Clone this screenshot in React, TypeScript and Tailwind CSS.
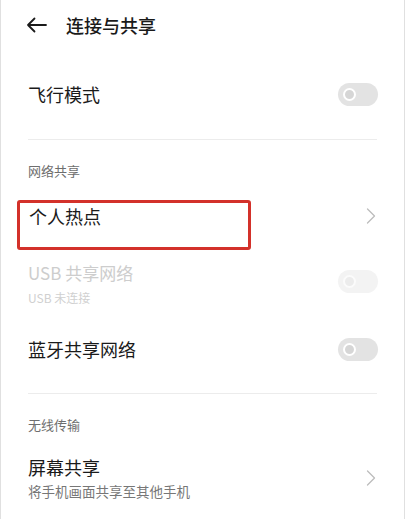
import React from "react";

const FONT = { fontFamily: '"Noto Sans CJK SC", "Noto Sans", sans-serif' };

const Toggle = ({ disabled = false }: { disabled?: boolean }) => (
  <div
    className={`w-[40px] h-[23px] rounded-full flex items-center pl-[5px] ${
      disabled ? "bg-[#f3f3f3]" : "bg-[#e3e3e3]"
    }`}
  >
    <span
      className={`w-[13px] h-[13px] rounded-full border-[2.5px] ${
        disabled ? "border-[#fbfbfb] bg-[#ececec]" : "border-white bg-[#d6d6d6]"
      }`}
    />
  </div>
);

const Chevron = () => (
  <svg width="10" height="16" viewBox="0 0 10 16" fill="none">
    <path d="M1.5 1L8.5 8L1.5 15" stroke="#bdbdbd" strokeWidth="1.3" strokeLinecap="round" strokeLinejoin="round" />
  </svg>
);

const Divider = ({ className = "" }: { className?: string }) => (
  <div className={`mx-[27px] h-px bg-[#ececec] ${className}`} />
);

const SectionLabel = ({ text }: { text: string }) => (
  <div className="h-[48px] pt-[22px] px-[27px] text-[13px] leading-[18px] text-[#6e6e6e]">{text}</div>
);

const App = () => {
  return (
    <div className="w-[405px] min-h-[519px] bg-white border-x border-[#e0e0e0]" style={FONT}>
      <div className="h-[49px] flex items-center pl-[25px]">
        <svg width="21" height="16" viewBox="0 0 21 16" fill="none">
          <path d="M20 8H2M8.5 1.5L2 8L8.5 14.5" stroke="#1a1a1a" strokeWidth="1.8" strokeLinecap="round" strokeLinejoin="round" />
        </svg>
        <span className="ml-[19px] text-[18px] font-medium text-[#1a1a1a] leading-[24px]">连接与共享</span>
      </div>

      <div className="h-[90px] flex items-center justify-between pl-[27px] pr-[26px]">
        <span className="text-[18px] leading-[24px] text-[#1a1a1a]">飞行模式</span>
        <Toggle />
      </div>
      <Divider />

      <SectionLabel text="网络共享" />
      <div className="relative h-[56px] flex items-center justify-between pl-[28px] pr-[28px]">
        <span className="text-[18px] leading-[24px] text-[#1a1a1a]">个人热点</span>
        <Chevron />
        <div className="absolute left-[16px] top-[12px] w-[234px] h-[50px] rounded-[3px] border-[3px] border-[#d3312a]" />
      </div>

      <div className="h-[72px] flex items-start justify-between pl-[27px] pr-[26px]">
        <div className="pt-[18px]">
          <div className="text-[17px] leading-[22px] text-[#cdcdcd]">USB 共享网络</div>
          <div className="mt-[5px] text-[12px] leading-[18px] text-[#d0d0d0]">USB 未连接</div>
        </div>
        <div className="mt-[26px]">
          <Toggle disabled />
        </div>
      </div>

      <div className="h-[66px] flex items-center justify-between pl-[27px] pr-[26px]">
        <span className="text-[18px] leading-[24px] text-[#1a1a1a]">蓝牙共享网络</span>
        <Toggle />
      </div>
      <Divider className="mt-[11px]" />

      <SectionLabel text="无线传输" />
      <div className="h-[71px] flex items-center justify-between pl-[27px] pr-[28px]">
        <div>
          <div className="text-[18px] leading-[24px] text-[#1a1a1a]">屏幕共享</div>
          <div className="mt-[3px] text-[13.5px] leading-[18px] text-[#777]">将手机画面共享至其他手机</div>
        </div>
        <Chevron />
      </div>
    </div>
  );
};

export default App;
